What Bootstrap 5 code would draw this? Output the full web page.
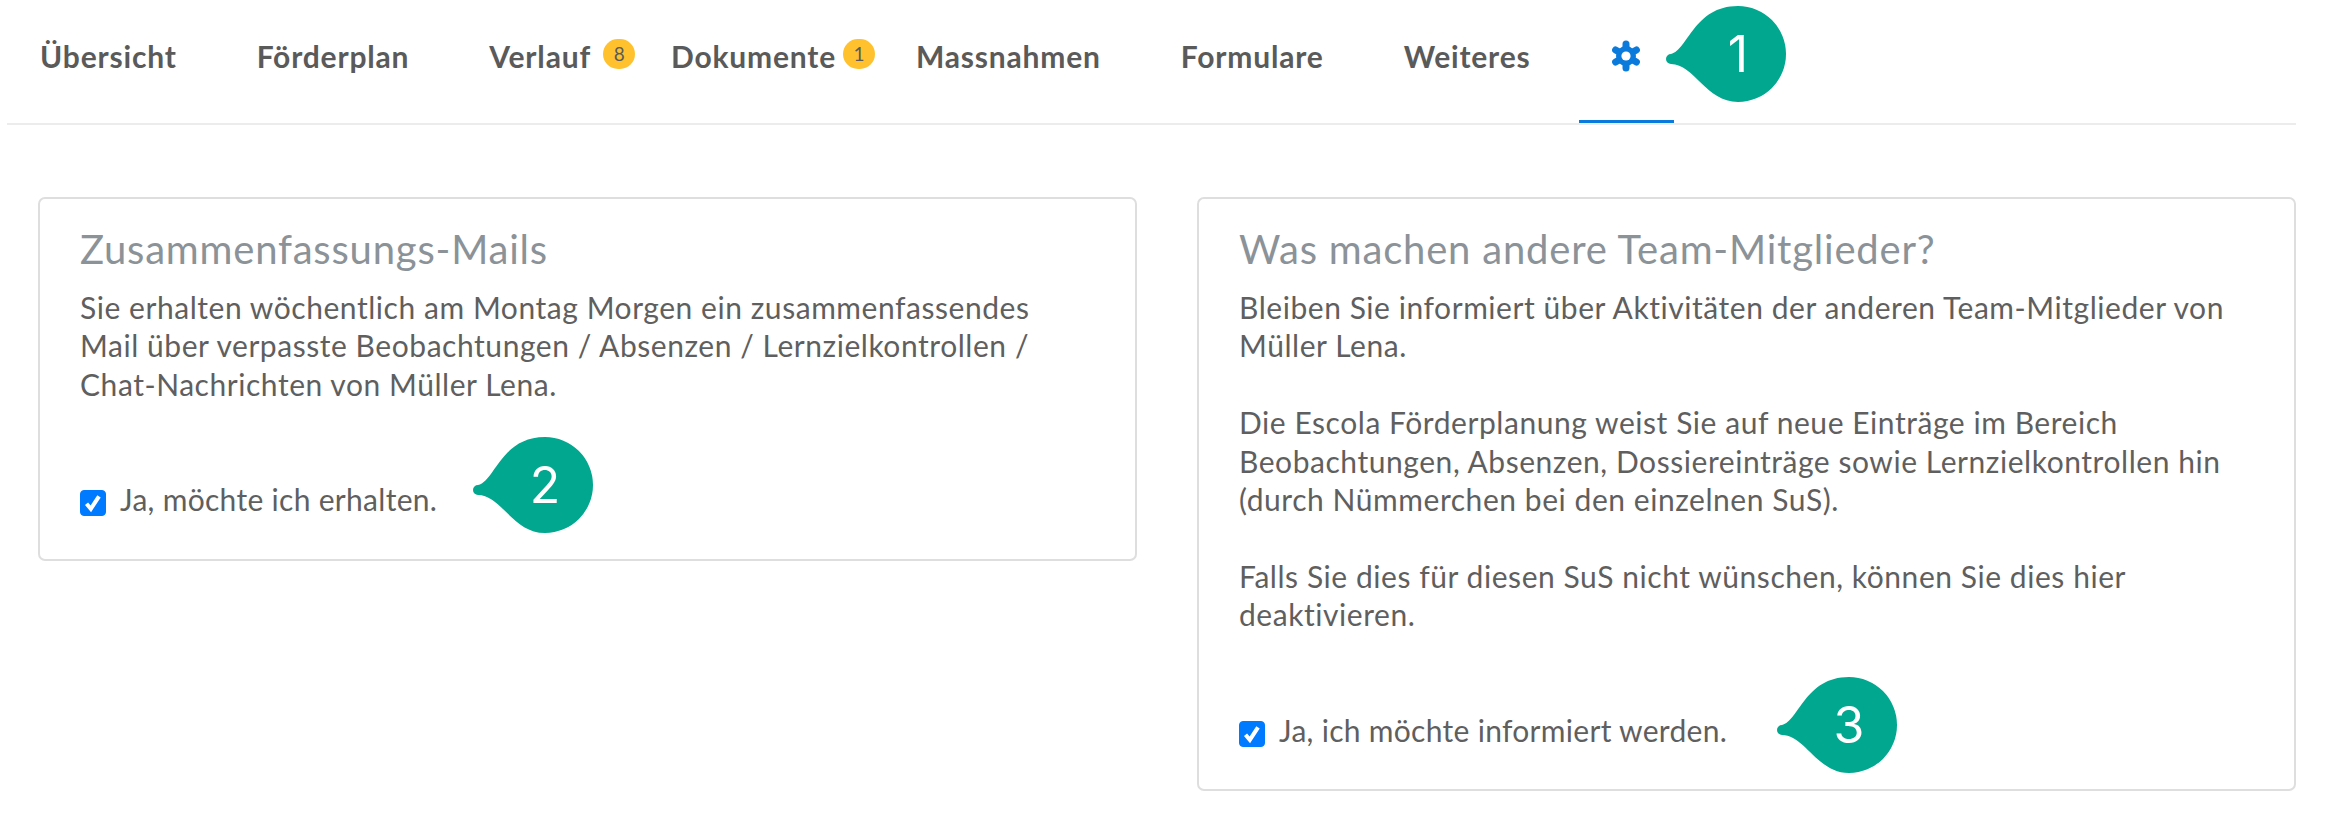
<!DOCTYPE html>
<html lang="de">
<head>
<meta charset="utf-8">
<title>Einstellungen</title>
<link href="https://cdn.jsdelivr.net/npm/bootstrap@5.3.0/dist/css/bootstrap.min.css" rel="stylesheet">
<style>
html,body{height:830px;overflow:hidden}
body{background:#fff;color:#5f5f5f;font-family:"Lato","Noto Sans",sans-serif;font-size:30px;letter-spacing:.55px;line-height:38.4px;position:relative}
.tabbar{height:125px;margin-right:52px;position:relative}
.tabbar::after{content:"";position:absolute;left:7px;right:0;bottom:0;height:2px;background:#ececec}
.tabitem{position:relative;padding:37px 40px 0;height:125px;font-weight:700;color:#5a5a5a;text-decoration:none;line-height:38px;font-size:30px;letter-spacing:.81px;white-space:nowrap}
.tabitem.gear{padding:40px 32px 0;width:95px;margin-left:8px}
.tabitem.gear::after{content:"";position:absolute;left:0;right:0;bottom:2px;height:3px;background:#0a7bdc;z-index:1}
.countpill{position:absolute;top:39px;width:32px;height:30px;border-radius:15px;background:#ffc22e;color:#5a5a5a;font-weight:400;font-size:19px;letter-spacing:0;line-height:30px;text-align:center;padding:0}
.panelrow{gap:60px;padding:72px 52px 0 38px;align-items:flex-start}
.panelbox{width:1099px;border:2px solid #dedede;border-radius:7px;padding:26px 40px 0 40px;background:#fff}
.panelbox.one{height:364px}
.panelbox.two{height:594px}
.paneltitle{font-size:40px;letter-spacing:.8px;line-height:48px;color:#8b9298;font-weight:400;margin:0 0 15px}
.paneltext{margin:0;white-space:nowrap}
.checkline{padding-left:40px;margin:0;min-height:0;display:flex;align-items:flex-start}
.checkline .form-check-label{letter-spacing:.3px}
.checkline .form-check-input{width:26px;height:26px;margin:10px 14px 0 -40px;float:none;border-radius:4px;flex:none}
.checkline .form-check-input:checked{background-color:#007bff;border-color:#007bff;--bs-form-check-bg-image:url("data:image/svg+xml,%3csvg xmlns='http://www.w3.org/2000/svg' viewBox='0 0 20 20'%3e%3cpath fill='none' stroke='%23fff' stroke-width='3.4' d='M4.6 10.6l3.6 4.2L15 4.4'/%3e%3c/svg%3e")}
.one .checkline,.two .checkline{margin-top:77px}
.pointer{position:absolute;width:120px;height:96px}
.pointer text{font-family:"Inter","Lato",sans-serif;font-size:50px;letter-spacing:0;fill:#fff;text-anchor:middle}
.p1{left:1666px;top:6px}
.p2{left:473px;top:437px}
.p3{left:1777px;top:677px}
</style>
</head>
<body>
<nav class="tabbar d-flex">
  <a class="tabitem" href="#">Übersicht</a>
  <a class="tabitem" href="#">Förderplan</a>
  <a class="tabitem" href="#">Verlauf<span class="countpill" style="left:154px">8</span></a>
  <a class="tabitem" href="#">Dokumente<span class="countpill" style="left:212px">1</span></a>
  <a class="tabitem" href="#">Massnahmen</a>
  <a class="tabitem" href="#">Formulare</a>
  <a class="tabitem" href="#">Weiteres</a>
  <a class="tabitem gear" href="#" aria-label="Einstellungen">
    <svg width="30" height="32" viewBox="0 0 30 32" class="d-block">
      <g stroke="#0a7bdc" stroke-width="7" stroke-linecap="round">
        <line x1="15" y1="4" x2="15" y2="28"/>
        <line x1="4.6" y1="10" x2="25.4" y2="22"/>
        <line x1="4.6" y1="22" x2="25.4" y2="10"/>
      </g>
      <circle cx="15" cy="16" r="10" fill="#0a7bdc"/>
      <circle cx="15" cy="16" r="4.6" fill="#fff"/>
    </svg>
  </a>
</nav>
<main class="panelrow d-flex">
  <section class="panelbox one">
    <h2 class="paneltitle">Zusammenfassungs-Mails</h2>
    <p class="paneltext">Sie erhalten wöchentlich am Montag Morgen ein zusammenfassendes<br>Mail über verpasste Beobachtungen / Absenzen / Lernzielkontrollen /<br>Chat-Nachrichten von Müller Lena.</p>
    <div class="form-check checkline">
      <input class="form-check-input" type="checkbox" id="c1" checked>
      <label class="form-check-label" for="c1">Ja, möchte ich erhalten.</label>
    </div>
  </section>
  <section class="panelbox two">
    <h2 class="paneltitle">Was machen andere Team-Mitglieder?</h2>
    <p class="paneltext">Bleiben Sie informiert über Aktivitäten der anderen Team-Mitglieder von<br>Müller Lena.<br><br>Die Escola Förderplanung weist Sie auf neue Einträge im Bereich<br>Beobachtungen, Absenzen, Dossiereinträge sowie Lernzielkontrollen hin<br>(durch Nümmerchen bei den einzelnen SuS).<br><br>Falls Sie dies für diesen SuS nicht wünschen, können Sie dies hier<br>deaktivieren.</p>
    <div class="form-check checkline">
      <input class="form-check-input" type="checkbox" id="c2" checked>
      <label class="form-check-label" for="c2">Ja, ich möchte informiert werden.</label>
    </div>
  </section>
</main>
<svg class="pointer p1" viewBox="0 0 120 96"><path fill="#02a78f" d="M5 48C22 44 28 0 72 0A48 48 0 0 1 72 96C40 96 28 58 5 58A5 5 0 0 1 5 48Z"/><text x="72" y="66">1</text></svg>
<svg class="pointer p2" viewBox="0 0 120 96"><path fill="#02a78f" d="M5 48C22 44 28 0 72 0A48 48 0 0 1 72 96C40 96 28 58 5 58A5 5 0 0 1 5 48Z"/><text x="72" y="66">2</text></svg>
<svg class="pointer p3" viewBox="0 0 120 96"><path fill="#02a78f" d="M5 48C22 44 28 0 72 0A48 48 0 0 1 72 96C40 96 28 58 5 58A5 5 0 0 1 5 48Z"/><text x="72" y="66">3</text></svg>
<script src="https://cdn.jsdelivr.net/npm/bootstrap@5.3.0/dist/js/bootstrap.bundle.min.js"></script>
</body>
</html>
